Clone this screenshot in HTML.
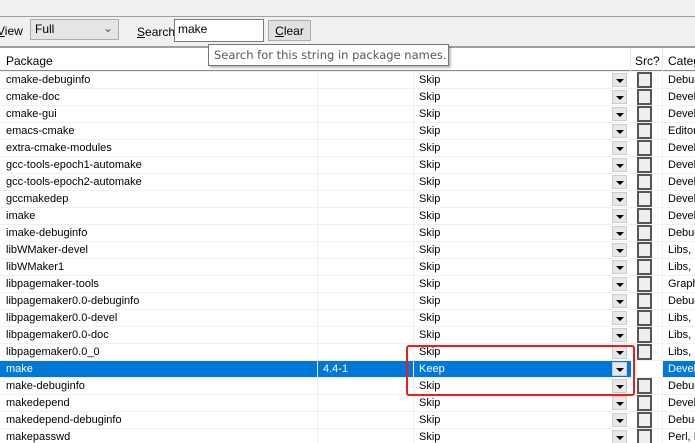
<html><head><style>
html,body{margin:0;width:695px;height:443px;overflow:hidden}
body{background:#f0f0f0;font-family:"Liberation Sans",sans-serif;font-size:11px;position:relative;color:#000}
.a{position:absolute}
.row{position:absolute;left:0;width:695px;height:17px;background:#fff;border-bottom:1px solid #f0f0f0;box-sizing:border-box;overflow:hidden;white-space:nowrap}
.row span{position:absolute;top:2px;white-space:nowrap}
.dd{position:absolute;left:612px;top:1px;width:15px;height:14px;background:#e8e8e8;border:1px solid #ccc;box-sizing:border-box}
.dd:after{content:"";position:absolute;left:3px;top:5px;border-left:4px solid transparent;border-right:4px solid transparent;border-top:4px solid #000}
.cb{position:absolute;left:637px;top:0;width:15px;height:16px;border:2px solid #555;background:#eee;box-sizing:border-box}
.vl{position:absolute;top:0;height:17px;width:1px;background:#f0f0f0}
</style></head><body>
<div class="a" style="left:0;top:16px;width:695px;height:1px;background:#a0a0a0"></div>
<div class="a" style="left:-3px;top:24px;font-size:12px"><u>V</u>iew</div>
<div class="a" style="left:30px;top:19px;width:89px;height:21px;border:1px solid #adadad;background:#e5e5e5;box-sizing:border-box;font-size:12px;padding:2px 4px">Full<span style="position:absolute;right:5px;top:1px;color:#555">&#8964;</span></div>
<div class="a" style="left:137px;top:25px;font-size:12px"><u>S</u>earch</div>
<div class="a" style="left:174px;top:19px;width:90px;height:23px;border:1px solid #7a7a7a;background:#fff;box-sizing:border-box;font-size:12px;padding:2px 3px">make</div>
<div class="a" style="left:268px;top:20px;width:43px;height:21px;border:1px solid #adadad;background:#e1e1e1;box-sizing:border-box;font-size:12px;text-align:center;padding-top:3px"><u>C</u>lear</div>
<div class="a" style="left:0;top:46px;width:695px;height:2px;background:#a0a0a0"></div>
<div class="a" style="left:0;top:48px;width:695px;height:23px;background:#fff;border-bottom:1px solid #888;box-sizing:border-box"></div>
<div class="a" style="left:6px;top:54px;font-size:12px">Package</div>
<div class="a" style="left:630px;top:48px;width:1px;height:23px;background:#e5e5e5"></div>
<div class="a" style="left:662px;top:48px;width:1px;height:23px;background:#e5e5e5"></div>
<div class="a" style="left:635px;top:54px;font-size:12px">Src?</div>
<div class="a" style="left:668px;top:54px;font-size:12px;white-space:nowrap">Categ</div>
<div id="rows"></div>
<script>
var d=[["cmake-debuginfo","Debug"],["cmake-doc","Devel"],["cmake-gui","Devel"],["emacs-cmake","Editor"],["extra-cmake-modules","Devel"],["gcc-tools-epoch1-automake","Devel"],["gcc-tools-epoch2-automake","Devel"],["gccmakedep","Devel"],["imake","Devel"],["imake-debuginfo","Debug"],["libWMaker-devel","Libs, I"],["libWMaker1","Libs, I"],["libpagemaker-tools","Graph"],["libpagemaker0.0-debuginfo","Debug"],["libpagemaker0.0-devel","Libs, I"],["libpagemaker0.0-doc","Libs, I"],["libpagemaker0.0_0","Libs, I"],["make","Devel"],["make-debuginfo","Debug"],["makedepend","Devel"],["makedepend-debuginfo","Debug"],["makepasswd","Perl, I"]];
var h="";d.forEach(function(r,i){var s=i==17;h+='<div class="row" style="top:'+(72+17*i)+'px;'+(s?'background:#0078d7;color:#fff':'')+'">'+(s?'<div class="a" style="left:631px;top:0;width:31px;height:17px;background:#fff"></div>':'')+'<span style="left:6px">'+r[0]+'</span>'+(s?'<span style="left:323px">4.4-1</span>':'')+'<div class="vl" style="left:317px"></div><div class="vl" style="left:413px"></div><div class="vl" style="left:662px"></div><span style="left:419px">'+(s?'Keep':'Skip')+'</span><div class="dd"></div><div class="cb" '+(s?'style="background:#fff;border-color:#fff"':'')+'></div><span style="left:668px">'+r[1]+'</span></div>';});
document.getElementById('rows').innerHTML=h;
</script>
<div class="a" style="left:406px;top:345px;width:229px;height:51px;border:2px solid #e8201c;border-radius:3px;box-sizing:border-box"></div>
<div class="a" style="left:208px;top:44px;width:241px;height:22px;background:#fff;border:1px solid #767676;box-sizing:border-box;font-family:'DejaVu Sans',sans-serif;font-size:11.5px;color:#575757;padding:3px 5px;box-shadow:2px 2px 2px rgba(0,0,0,.25);white-space:nowrap">Search for this string in package names.</div>
</body></html>
